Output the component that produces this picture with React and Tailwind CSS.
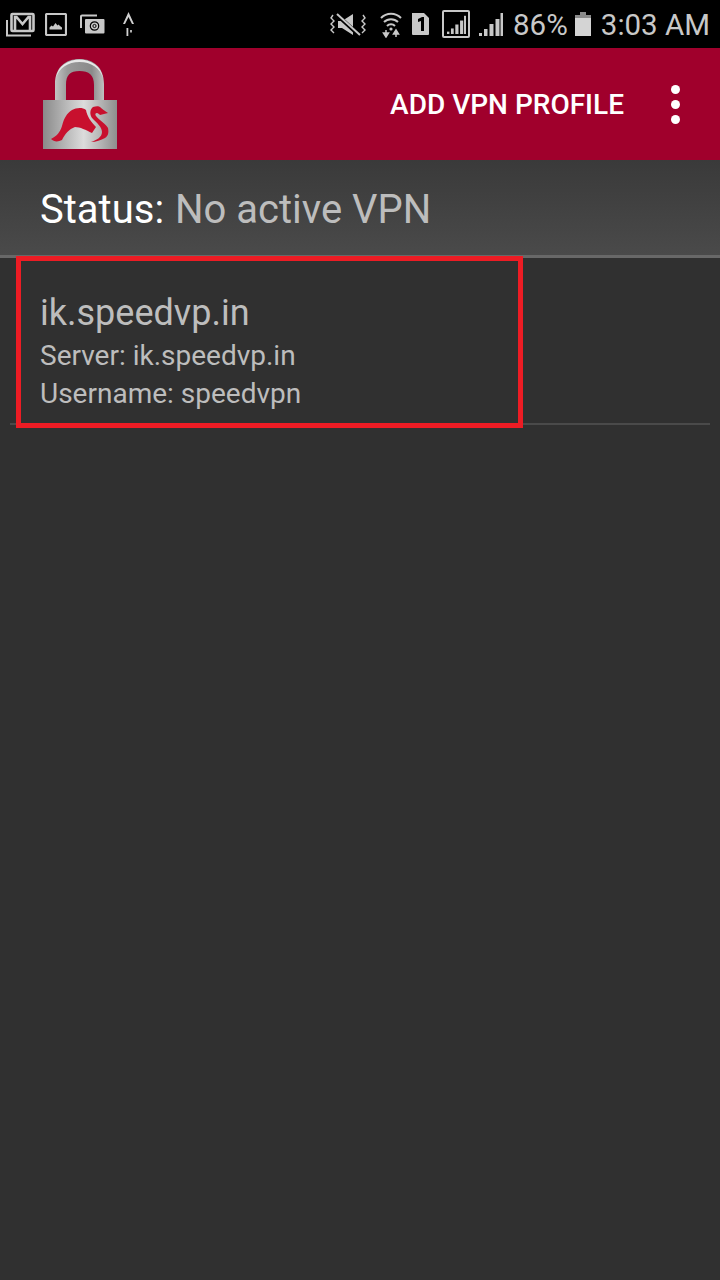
import React from "react";

function GmailIcon() {
  return (
    <svg width="29" height="25" viewBox="0 0 29 25" fill="none" stroke="#c8c8c8" className="shrink-0">
      <path d="M1 8v15.500h24" strokeWidth="2" />
      <rect x="5.500" y="2" width="22" height="17" rx="1" strokeWidth="2.600" />
      <path d="M9 18V5h1.500l6 7 6-7H24v13" strokeWidth="2.600" />
    </svg>
  );
}

function GalleryIcon() {
  return (
    <svg width="22" height="23" viewBox="0 0 22 23" className="shrink-0">
      <rect x="1" y="1" width="20" height="21" rx="1" fill="none" stroke="#c8c8c8" strokeWidth="2.200" />
      <path d="M4.500 16.500v-2l2-2 1.500 1 2.500-3.500 2 2.500 1-1 1.500 1.500 2 1.500v2z" fill="#c8c8c8" />
    </svg>
  );
}

function MailIcon() {
  return (
    <svg width="25" height="20" viewBox="0 0 25 20" className="shrink-0">
      <path d="M1 14V2.500a1 1 0 0 1 1-1h15" fill="none" stroke="#c8c8c8" strokeWidth="2" />
      <rect x="5" y="5" width="19.500" height="14.500" rx="1" fill="#c8c8c8" />
      <circle cx="14.500" cy="12" r="4.200" fill="none" stroke="#000" strokeWidth="1.200" />
      <circle cx="14.500" cy="12" r="1.600" fill="none" stroke="#000" strokeWidth="1" />
    </svg>
  );
}

function DataIcon() {
  return (
    <svg width="11" height="25" viewBox="0 0 11 25" className="shrink-0">
      <path d="M5.500 0L0 12h2L5.500 5 9 12h2z" fill="#d0d0d0" />
      <rect x="3.500" y="16" width="1.800" height="8" fill="#d0d0d0" />
      <rect x="7" y="18" width="2" height="2.500" fill="#b0b0b0" />
    </svg>
  );
}

function VibrateIcon() {
  return (
    <svg width="37" height="27" viewBox="0 0 37 27" fill="none" className="shrink-0">
      <path d="M4 4l-2 3 3 3-3 3 3 3-3 3 3 3M34 4l2 3-3 3 3 3-3 3 3 3-3 3" stroke="#c8c8c8" strokeWidth="1.400" />
      <path d="M9 10h4l11-7v21L13 17H9z" fill="#c8c8c8" />
      <path d="M7 3l24 22" stroke="#000" strokeWidth="4" />
      <path d="M8 3l23 21" stroke="#c8c8c8" strokeWidth="2" />
    </svg>
  );
}

function WifiIcon() {
  return (
    <svg width="22" height="27" viewBox="0 0 22 27" fill="none" className="shrink-0">
      <path d="M1 7a14 14 0 0 1 20 0M4 11a10 10 0 0 1 14 0M7 15a5.500 5.500 0 0 1 8 0" stroke="#c8c8c8" strokeWidth="2" />
      <circle cx="11" cy="18" r="1.600" fill="#c8c8c8" />
      <path d="M6 19v5M3.500 22L6 26l2.500-4z" stroke="#c8c8c8" strokeWidth="1.500" fill="#c8c8c8" />
      <path d="M16 26v-5M13.500 23L16 19l2.500 4z" stroke="#c8c8c8" strokeWidth="1.500" fill="#c8c8c8" />
    </svg>
  );
}

function SimIcon() {
  return (
    <svg width="19" height="24" viewBox="0 0 19 24" className="shrink-0">
      <path d="M1 1h12l5 5v16a1 1 0 0 1-1 1H2a1 1 0 0 1-1-1z" fill="#c8c8c8" />
      <path d="M7 7l4-2h2v14h-3V9l-3 1z" fill="#000" />
    </svg>
  );
}

function SignalBars({ size = 24 }) {
  return (
    <svg width={size} height={size} viewBox="0 0 24 24" className="shrink-0">
      <rect x="0" y="21" width="3" height="3" fill="#c8c8c8" />
      <rect x="5" y="17" width="3.500" height="7" fill="#c8c8c8" />
      <rect x="10.500" y="12" width="4" height="12" fill="#c8c8c8" />
      <rect x="16.500" y="7" width="4" height="17" fill="#c8c8c8" />
      <rect x="21.500" y="1" width="2.500" height="23" fill="#c8c8c8" />
    </svg>
  );
}

function BatteryIcon() {
  return (
    <svg width="16" height="24" viewBox="0 0 16 24" className="shrink-0">
      <rect x="5" y="0" width="6" height="3" fill="#8a8a8a" />
      <rect x="0" y="3" width="16" height="3" fill="#8a8a8a" />
      <rect x="0" y="6" width="16" height="18" fill="#d4d4d4" />
    </svg>
  );
}

function LockLogo() {
  return (
    <svg width="76" height="92" viewBox="0 0 76 92" className="shrink-0">
      <defs>
        <linearGradient id="metal" x1="0" x2="1" y1="0" y2="0">
          <stop offset="0" stopColor="#8a8a8a" />
          <stop offset="0.55" stopColor="#dcdcdc" />
          <stop offset="1" stopColor="#8e8e8e" />
        </linearGradient>
        <linearGradient id="shackle" x1="0" x2="1" y1="0" y2="0">
          <stop offset="0" stopColor="#c4c4c4" />
          <stop offset="0.25" stopColor="#9a9a9a" />
          <stop offset="0.75" stopColor="#8a8a8a" />
          <stop offset="1" stopColor="#c0c0c0" />
        </linearGradient>
      </defs>
      <path d="M13 42V26C13 9 24 1 37.500 1S62 9 62 26v16H52V27c0-10-5-14-14.500-14S24 17 24 27v15z" fill="url(#shackle)" />
      <path d="M14 20C16 8 26 1.500 37.500 1.500S59 8 61 20C58 10 49 4 37.500 4S17 10 14 20z" fill="#e8e8e8" />
      <rect x="1" y="42" width="74" height="49" fill="url(#metal)" />
      <path d="M9 81C15 78 18 74 20 68C22 60 25 55 30 52C34 50 40 49 44 52C45 58 49 64 54 69L50 75C44 72 38 69 33 69C27 71 23 76 20 82C16 84 12 84 9 81Z" fill="#c8102e" />
      <path d="M49 84c6-2 11-5 11-10 0-5-5-9-9-13-4-4-3-10 0-12 3-1 6-1 7 0 2 2 5 4 8 6l-8 2c-1-1-2-2-3-2-2 0-2 2-1 3 3 4 10 8 12 12 1 5 0 8-3 10-4 2-9 4-14 4z" fill="#c8102e" />
    </svg>
  );
}

export default function App() {
  return (
    <div className="relative w-[720px] h-[1280px] overflow-hidden bg-[#303030] font-['Roboto',sans-serif]">
      {/* status bar */}
      <div className="h-12 bg-black flex items-center justify-between pl-[6px] pr-[10px]">
        <div className="flex items-center">
          <GmailIcon />
          <div className="ml-[10px]"><GalleryIcon /></div>
          <div className="ml-[13px]"><MailIcon /></div>
          <div className="ml-[18px]"><DataIcon /></div>
        </div>
        <div className="flex items-center text-[#c8c8c8] text-[29.5px] leading-none">
          <VibrateIcon />
          <div className="ml-[14px]"><WifiIcon /></div>
          <div className="ml-[9px]"><SimIcon /></div>
          <div className="ml-[12px] w-[28px] h-[28px] border-2 border-[#c8c8c8] rounded-[2px] flex items-end justify-center pb-[2px]">
            <SignalBars size={19} />
          </div>
          <div className="ml-[9px]"><SignalBars /></div>
          <span className="ml-[10px] pt-[3px]">86%</span>
          <div className="ml-[7px]"><BatteryIcon /></div>
          <span className="ml-[10px] pt-[3px]">3:03 AM</span>
        </div>
      </div>

      {/* app bar */}
      <header className="h-28 bg-[#a0002c] flex items-center justify-between pl-[42px] pr-[40px]">
        <div className="mt-0"><LockLogo /></div>
        <div className="flex items-center">
          <span className="text-white text-[28px] font-medium pt-[2px]">ADD VPN PROFILE</span>
          <div className="ml-[47px] flex flex-col gap-[6px]">
            <span className="w-[9px] h-[9px] rounded-full bg-white" />
            <span className="w-[9px] h-[9px] rounded-full bg-white" />
            <span className="w-[9px] h-[9px] rounded-full bg-white" />
          </div>
        </div>
      </header>

      {/* status row */}
      <div className="h-[98px] bg-gradient-to-b from-[#3a3a3a] to-[#4a4a4a] border-b-[3px] border-[#686868] flex items-center pl-10 pt-1 text-[40px]">
        <span className="text-white">Status:</span>
        <span className="ml-[11px] text-[#bdbdbd]">No active VPN</span>
      </div>

      {/* profile list */}
      <div className="px-[10px]">
        <div className="border-b-2 border-[#4a4a4a] pl-[30px] pt-[33px] pb-[10px] text-[#bdbdbd]">
          <div className="text-[36px] leading-[44px]">ik.speedvp.in</div>
          <div className="text-[28px] leading-[38px] mt-[2px]">Server: ik.speedvp.in</div>
          <div className="text-[28px] leading-[38px]">Username: speedvpn</div>
        </div>
      </div>

      {/* annotation box */}
      <div className="absolute left-[16px] top-[256px] w-[507px] h-[172px] border-[5px] border-[#ed1c24]" />
    </div>
  );
}
